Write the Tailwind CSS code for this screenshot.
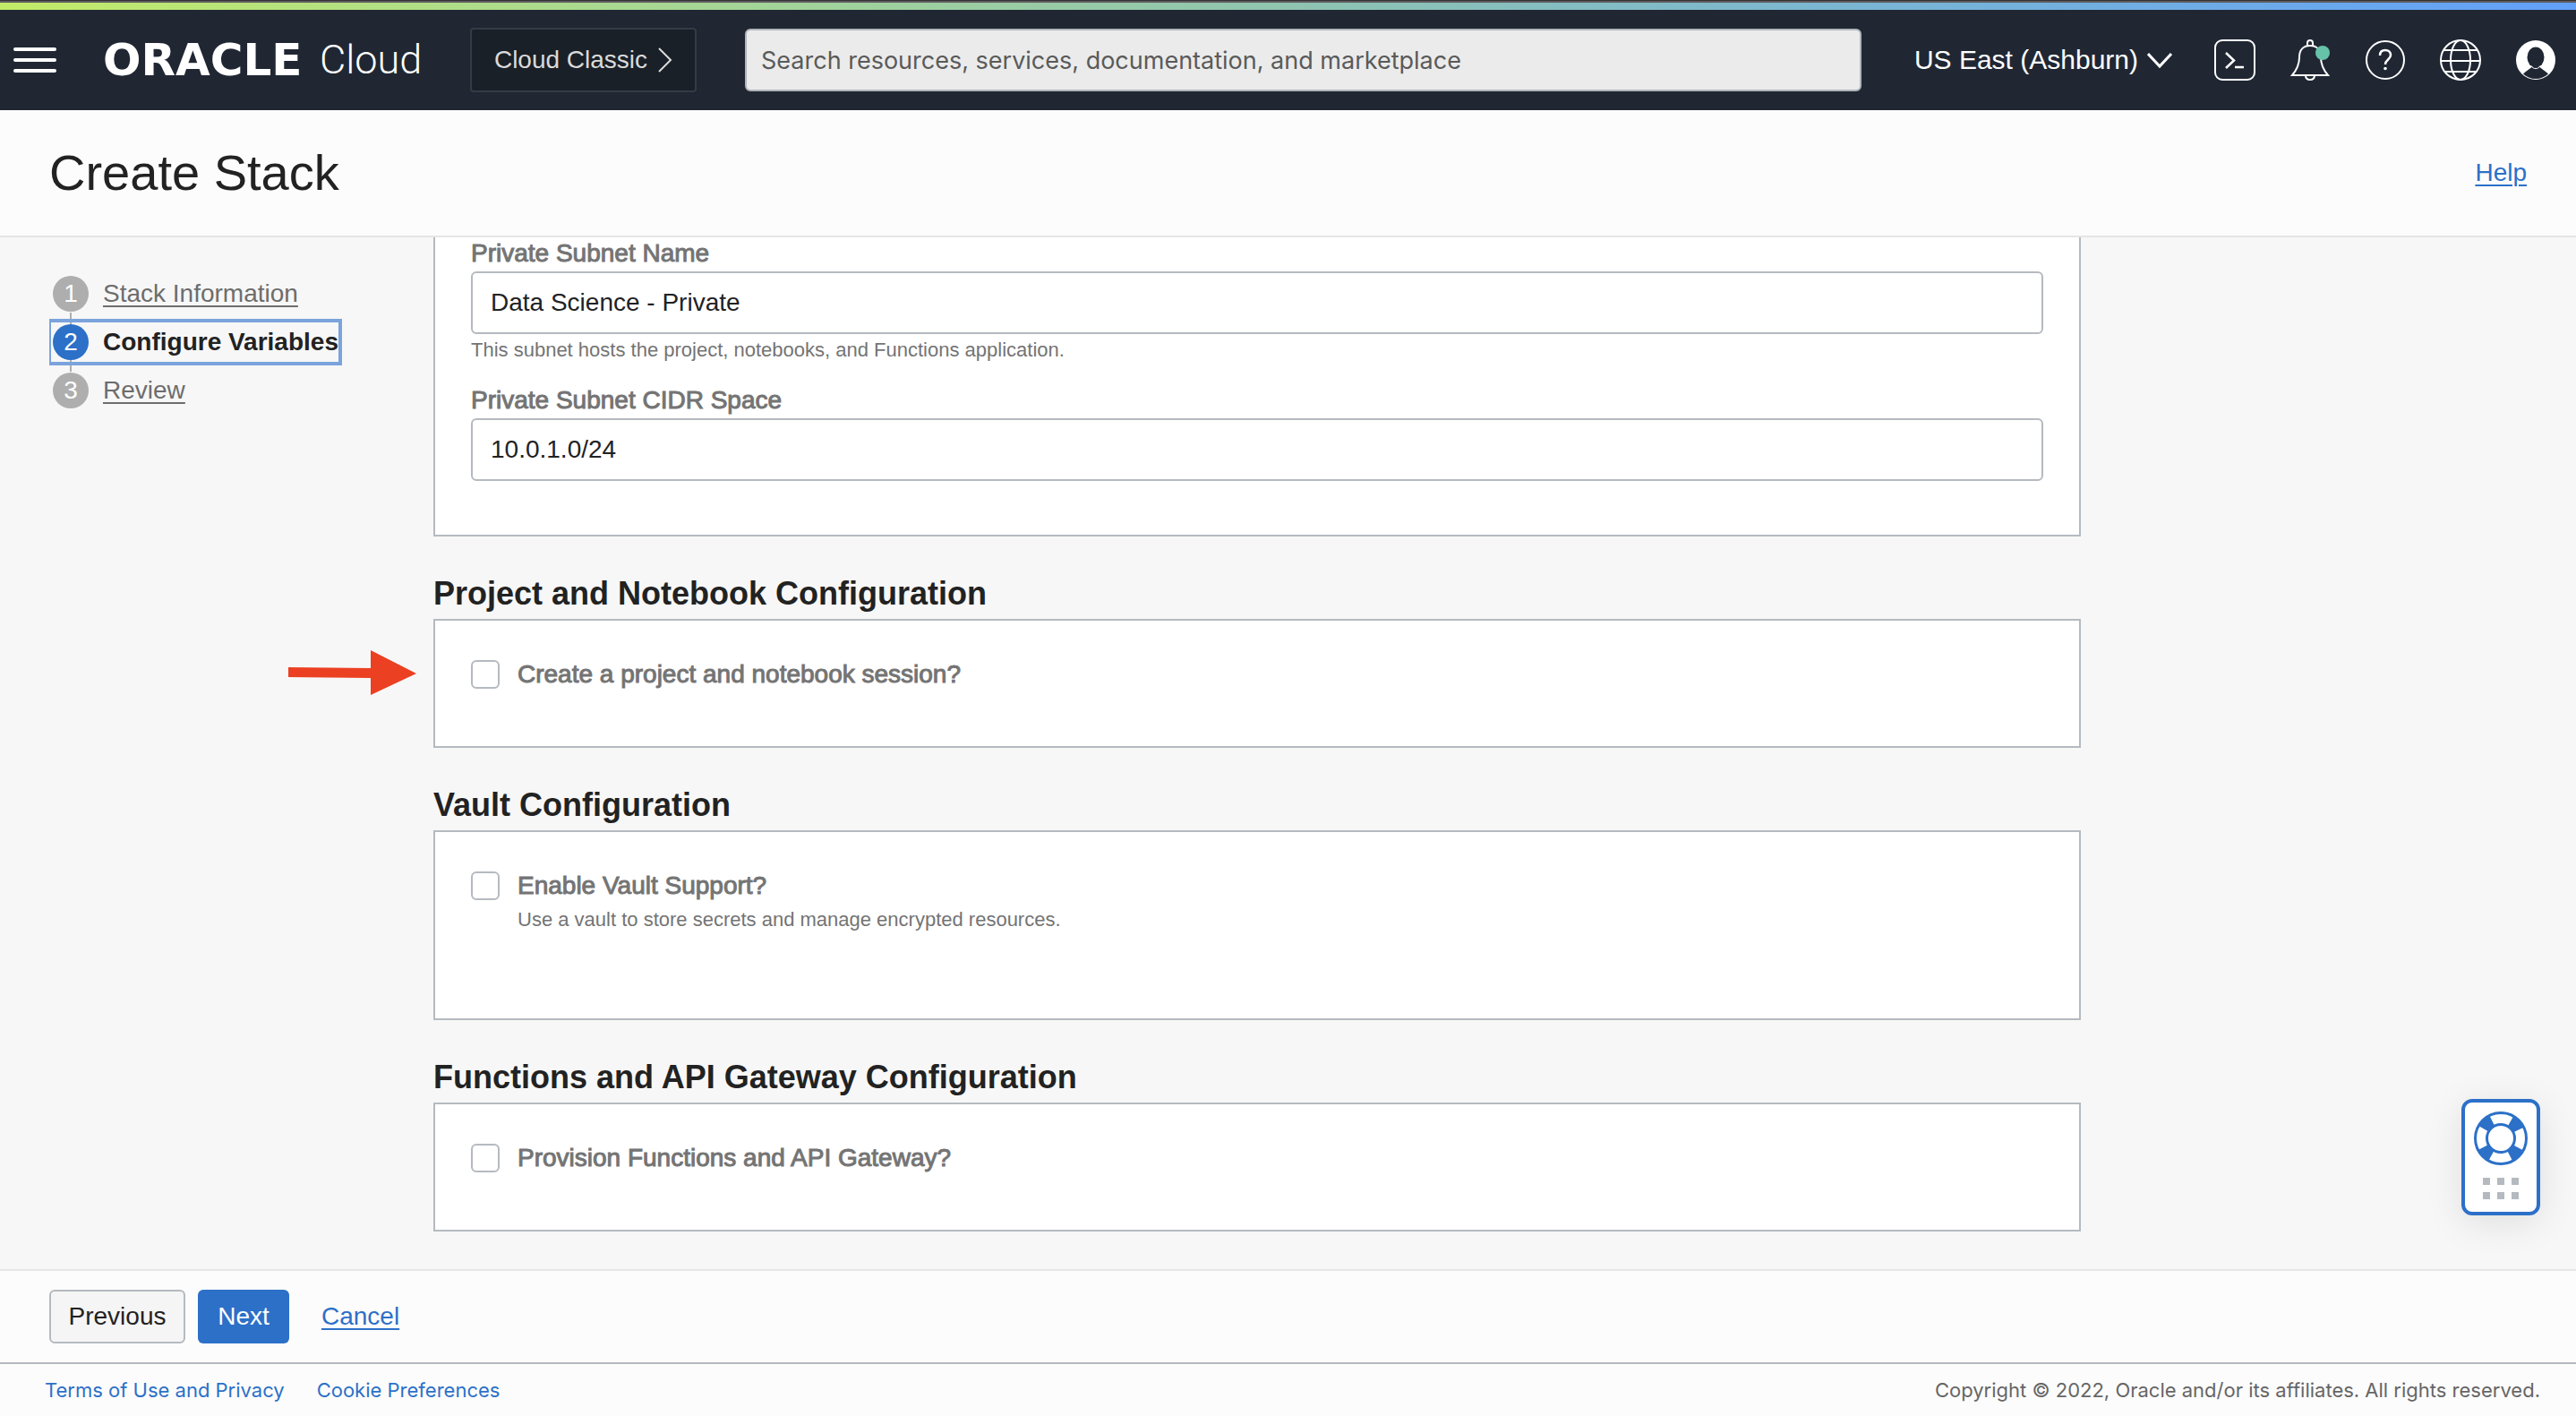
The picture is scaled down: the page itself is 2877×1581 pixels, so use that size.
<!DOCTYPE html>
<html lang="en">
<head>
<meta charset="utf-8">
<title>Create Stack</title>
<script src="https://cdn.jsdelivr.net/npm/@tailwindcss/browser@4"></script>
</head>
<body class="flex h-screen flex-col overflow-hidden bg-[#f7f7f7] font-['Liberation_Sans',Arial,sans-serif] text-[28px] leading-8 text-[#222]">

<div class="h-[3px] shrink-0 border-t border-[#333] bg-[#5f5c60]"></div>
<div class="h-2 shrink-0 bg-linear-to-r from-[#c2eb67] via-[#8fc4b0] to-[#62a0fa]"></div>

<header class="flex h-28 shrink-0 items-center bg-[#202733] pr-[22px] pl-[15px] text-white">
  <button aria-label="Menu" class="flex w-12 flex-col gap-2">
    <span class="h-1 w-full rounded-xs bg-white"></span>
    <span class="h-1 w-full rounded-xs bg-white"></span>
    <span class="h-1 w-full rounded-xs bg-white"></span>
  </button>
  <a href="#" class="ml-[52px] flex w-[410px] items-center">
    <span class="w-[242px] font-['DejaVu_Sans',sans-serif] text-[50px] leading-[50px] font-bold">ORACLE</span>
    <span class="font-['Roboto',sans-serif] text-[45px] leading-[50px] font-light">Cloud</span>
  </a>
  <button class="flex h-[72px] w-[253px] shrink-0 items-center justify-center gap-3 rounded-sm border-2 border-[#343b47] bg-[#1a2027] text-[#dadada]">
    Cloud Classic
    <svg class="h-7 w-4" viewBox="0 0 16 28" fill="none" stroke="currentColor" stroke-width="2"><path d="M1 1l13 13L1 27"/></svg>
  </button>
  <input type="search" aria-label="Search" placeholder="Search resources, services, documentation, and marketplace" class="ml-[54px] h-[70px] max-w-[1247px] min-w-0 flex-1 rounded-md border-2 border-[#b0b4bb] bg-[#ebebeb] px-4 font-['Inter',sans-serif] text-[27px] text-[#222] placeholder:text-[#5a5a5a]">
  <div class="ml-auto flex items-center gap-[38px]">
    <button class="mr-[9px] flex items-center gap-[10px] text-[30px] whitespace-nowrap">
      US East (Ashburn)
      <svg class="h-5 w-7" viewBox="0 0 28 20" fill="none" stroke="currentColor" stroke-width="3"><path d="M1 3l13 14L27 3"/></svg>
    </button>
    <button aria-label="Cloud Shell"><svg class="size-[46px]" viewBox="0 0 46 46" fill="none" stroke="currentColor" stroke-width="2"><rect x="1" y="1" width="44" height="44" rx="8"/><path d="M13 15l9 8.500-9 8.500M23 31h10" stroke-width="2.500"/></svg></button>
    <button aria-label="Announcements"><svg class="size-[46px]" viewBox="0 0 46 46" fill="none" stroke="currentColor" stroke-width="2"><path d="M20 7V4a3 3 0 016 0v3M3 40c6-7 8-13 8-20 0-9 5-13 12-13s12 4 12 13c0 7 2 13 8 20zM18 40c0 3 2 5 5 5s5-2 5-5"/><circle cx="37" cy="15" r="8" fill="#66c2a9" stroke="none"/></svg></button>
    <button aria-label="Help"><svg class="size-[46px]" viewBox="0 0 46 46" fill="none" stroke="currentColor" stroke-width="2"><circle cx="23" cy="23" r="21"/><path d="M17 18c0-4 2.500-6 6-6s6 2.200 6 5.500c0 5-6 5-6 10.500" stroke-width="2.500"/><circle cx="23" cy="32.500" r="1.800" fill="currentColor" stroke="none"/></svg></button>
    <button aria-label="Language"><svg class="size-[46px]" viewBox="0 0 46 46" fill="none" stroke="currentColor" stroke-width="2"><circle cx="23" cy="23" r="22"/><ellipse cx="23" cy="23" rx="11" ry="22"/><path d="M1 24h44M5 12h36M5 36h36"/></svg></button>
    <button aria-label="Profile"><svg class="size-[46px]" viewBox="0 0 46 46"><circle cx="23" cy="23" r="22" fill="#fff"/><ellipse cx="23" cy="20" rx="9.500" ry="11.500" fill="#202733"/><path d="M9 38.500c3-3 6-4.500 9.500-7.500h9c3.500 3 6.500 4.500 9.500 7.500-3.500 3.500-8.500 5.500-14 5.500s-10.500-2-14-5.500z" fill="#202733"/><path d="M17.500 29c2 3 3.500 3.500 5.500 3.500s3.500-.5 5.500-3.500" fill="none" stroke="#fff"/></svg></button>
  </div>
</header>

<div class="flex h-[142px] shrink-0 items-center justify-between border-b-2 border-[#e5e5e5] bg-[#fcfcfc] px-[55px]">
  <h1 class="text-[56px] leading-[64px]">Create Stack</h1>
  <a href="#" class="text-[#2c70c8] underline decoration-2 underline-offset-4">Help</a>
</div>

<main class="relative flex min-h-0 flex-1 overflow-hidden">
  <nav aria-label="Steps" class="w-[484px] shrink-0 pt-[36px] pl-[55px]">
    <ol>
      <li class="flex h-[54px] w-[327px] items-center gap-4 pl-1">
        <span class="flex size-10 items-center justify-center rounded-full bg-[#aeaeae] text-white">1</span>
        <a href="#" class="text-[#6d6d6d] underline decoration-2 underline-offset-4">Stack Information</a>
      </li>
      <li class="relative flex h-[54px] w-[327px] items-center">
        <span class="absolute top-[-6px] left-[23px] h-[66px] w-[2px] bg-[#aeaeae]"></span>
        <a href="#" aria-current="step" class="relative flex h-[52px] w-full items-center gap-4 border-4 border-l-2 border-[#7ba3dc] pl-[2px] font-bold whitespace-nowrap">
          <span class="flex size-10 shrink-0 items-center justify-center rounded-full bg-[#2c70c8] font-normal text-white">2</span>
          Configure Variables
        </a>
      </li>
      <li class="flex h-[54px] w-[327px] items-center gap-4 pl-1">
        <span class="flex size-10 items-center justify-center rounded-full bg-[#aeaeae] text-white">3</span>
        <a href="#" class="text-[#6d6d6d] underline decoration-2 underline-offset-4">Review</a>
      </li>
    </ol>
  </nav>

  <form class="max-w-[1840px] min-w-0 flex-1 text-[#747474]">
    <section class="border-2 border-t-0 border-[#b5bac0] bg-white px-10 pt-[2px] pb-[60px]">
      <label for="subnet-name" class="block [-webkit-text-stroke:1px]">Private Subnet Name</label>
      <input id="subnet-name" type="text" value="Data Science - Private" class="mt-1 block h-[70px] w-full rounded-md border-2 border-[#b5bac0] bg-white px-5 text-[#222]">
      <p class="pt-[2px] text-[22px]">This subnet hosts the project, notebooks, and Functions application.</p>
      <label for="subnet-cidr" class="mt-6 block [-webkit-text-stroke:1px]">Private Subnet CIDR Space</label>
      <input id="subnet-cidr" type="text" value="10.0.1.0/24" class="mt-1 block h-[70px] w-full rounded-md border-2 border-[#b5bac0] bg-white px-5 text-[#222]">
    </section>

    <h2 class="flex h-[92px] items-end pb-2 text-[36px] leading-10 font-bold text-[#222]">Project and Notebook Configuration</h2>
    <section class="relative flex h-36 items-start gap-5 border-2 border-[#b5bac0] bg-white px-10 pt-11">
      <svg class="absolute top-[33px] left-[-164px] h-[50px] w-[143px]" viewBox="0 0 143 50" fill="#ec4023"><path d="M0 19l92 1V0l51 26-51 24V31L0 30z"/></svg>
      <input id="project" type="checkbox" class="size-8 shrink-0 appearance-none rounded-md border-2 border-[#b5bac0] bg-white">
      <label for="project" class="[-webkit-text-stroke:1px]">Create a project and notebook session?</label>
    </section>

    <h2 class="flex h-[92px] items-end pb-2 text-[36px] leading-10 font-bold text-[#222]">Vault Configuration</h2>
    <section class="flex h-[212px] items-start gap-5 border-2 border-[#b5bac0] bg-white px-10 pt-11">
      <input id="vault" type="checkbox" class="size-8 shrink-0 appearance-none rounded-md border-2 border-[#b5bac0] bg-white">
      <div>
        <label for="vault" class="block [-webkit-text-stroke:1px]">Enable Vault Support?</label>
        <p class="mt-[6px] text-[22px]">Use a vault to store secrets and manage encrypted resources.</p>
      </div>
    </section>

    <h2 class="flex h-[92px] items-end pb-2 text-[36px] leading-10 font-bold text-[#222]">Functions and API Gateway Configuration</h2>
    <section class="flex h-36 items-start gap-5 border-2 border-[#b5bac0] bg-white px-10 pt-11">
      <input id="functions" type="checkbox" class="size-8 shrink-0 appearance-none rounded-md border-2 border-[#b5bac0] bg-white">
      <label for="functions" class="[-webkit-text-stroke:1px]">Provision Functions and API Gateway?</label>
    </section>
  </form>

  <button aria-label="Support" class="absolute right-10 bottom-[60px] flex h-[130px] w-[88px] flex-col items-center rounded-xl border-4 border-[#2c70c8] bg-white pt-[10px] shadow-[0_8px_40px_rgba(0,20,10,0.1)]">
    <svg class="size-[60px]" viewBox="0 0 60 60" fill="none" stroke="#2c70c8"><circle cx="30" cy="30" r="22" stroke-width="14" stroke-dasharray="13 21.560" stroke-dashoffset="-10.780"/><circle cx="30" cy="30" r="28.500" stroke-width="3"/><circle cx="30" cy="30" r="15.500" stroke-width="3"/></svg>
    <svg class="mt-[14px] h-6 w-10" viewBox="0 0 40 24" fill="#b5bac0"><path d="M0 0h8v8H0zM16 0h8v8h-8zM32 0h8v8h-8zM0 16h8v8H0zM16 16h8v8h-8zM32 16h8v8h-8z"/></svg>
  </button>
</main>

<div class="flex h-[104px] shrink-0 items-center border-t-2 border-[#e5e5e5] bg-[#fcfcfc] px-[55px]">
  <button class="h-[60px] w-[152px] rounded-md border-2 border-[#b5bac0] bg-[#f5f5f5]">Previous</button>
  <button class="ml-[14px] h-[60px] w-[102px] rounded-md bg-[#2c70c8] text-white">Next</button>
  <a href="#" class="ml-9 text-[#2c70c8] underline decoration-2 underline-offset-4">Cancel</a>
</div>

<footer class="flex h-[60px] shrink-0 items-center justify-between border-t-2 border-[#b5bac0] bg-[#fcfcfc] pr-10 pl-[50px] font-['Inter',sans-serif] text-[22px] text-[#666]">
  <div class="flex gap-9 text-[#2c70c8]">
    <a href="#">Terms of Use and Privacy</a>
    <a href="#">Cookie Preferences</a>
  </div>
  <p>Copyright © 2022, Oracle and/or its affiliates. All rights reserved.</p>
</footer>
</body>
</html>
